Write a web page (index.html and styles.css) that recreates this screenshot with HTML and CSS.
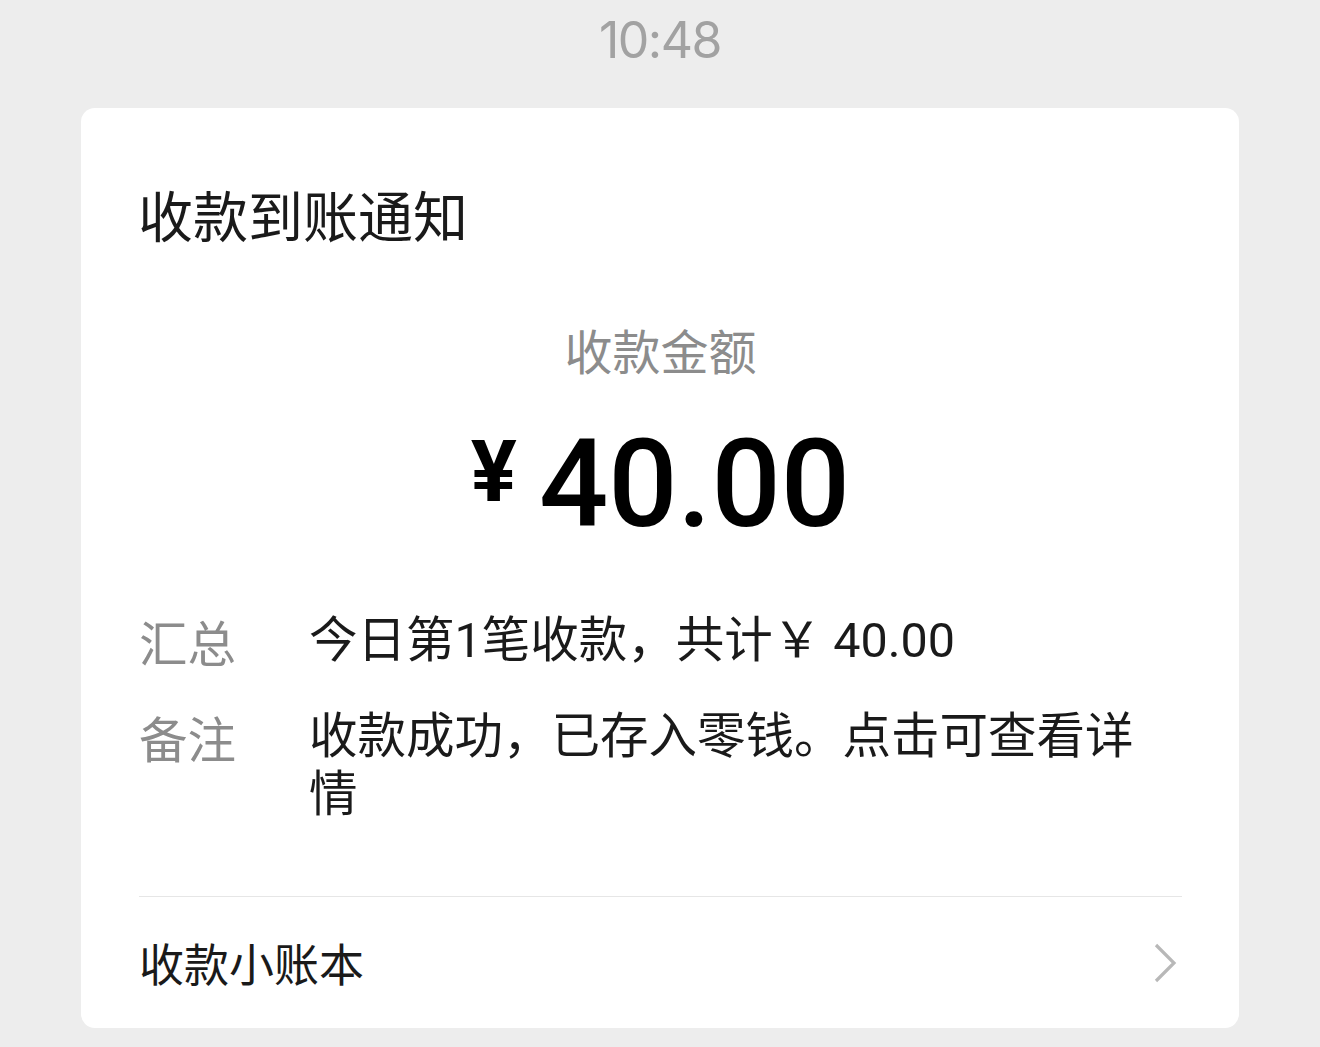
FILE: index.html
```html
<!DOCTYPE html>
<html lang="zh-CN">
<head>
<meta charset="utf-8">
<title>收款到账通知</title>
<link rel="stylesheet" href="styles.css">
</head>
<body>
  <div class="time">10:48</div>
  <div class="card">
    <div class="card-body">
      <div class="title">收款到账通知</div>
      <div class="amount-label">收款金额</div>
      <div class="amount">
        <span class="yen">¥</span><span class="num">40.00</span>
      </div>
      <div class="rows">
        <div class="row">
          <div class="label">汇总</div>
          <div class="value">今日第1笔收款，共计￥ 40.00</div>
        </div>
        <div class="row">
          <div class="label">备注</div>
          <div class="value">收款成功，已存入零钱。点击可查看详情</div>
        </div>
      </div>
    </div>
    <div class="footer">
      <span class="footer-text">收款小账本</span>
      <svg class="chevron" width="24" height="42" viewBox="0 0 24 42" aria-hidden="true">
        <path d="M3 3 L21 21 L3 39" fill="none" stroke="#b8b8b8" stroke-width="3.2" stroke-linecap="butt" stroke-linejoin="miter"/>
      </svg>
    </div>
  </div>
</body>
</html>
```

FILE: styles.css
```css
html, body {
  margin: 0;
  padding: 0;
  background: #ededed;
}
body {
  font-family: Inter, "Noto Sans CJK SC", sans-serif;
  color: #1a1a1a;
  width: 1320px;
  height: 1047px;
  overflow: hidden;
}
.time {
  padding-top: 10px;
  height: 60px;
  line-height: 60px;
  font-size: 50px;
  letter-spacing: -1.5px;
  color: #a2a2a2;
  text-align: center;
  font-weight: 400;
}
.card {
  margin: 38px 81px 0;
  background: #ffffff;
  border-radius: 14px;
  padding: 0 57px 0 58px;
}
.card-body {
  padding-top: 73px;
  border-bottom: 1.5px solid #e6e6e6;
  padding-bottom: 72px;
}
.title {
  font-family: "Noto Sans CJK SC", sans-serif;
  font-size: 55px;
  line-height: 64px;
  color: #1a1a1a;
  margin-left: -1px;
}
.amount-label {
  margin-top: 74px;
  font-family: "Noto Sans CJK SC", sans-serif;
  font-size: 48px;
  line-height: 60px;
  color: #8c8c8c;
  text-align: center;
}
.amount {
  margin-top: 44px;
  display: flex;
  justify-content: center;
  align-items: flex-start;
  color: #000;
}
.yen {
  font-family: Roboto, sans-serif;
  font-weight: 700;
  font-size: 86px;
  line-height: 86px;
  margin-top: 6px;
  margin-right: 22px;
}
.num {
  font-family: Roboto, sans-serif;
  font-weight: 500;
  font-size: 122px;
  line-height: 124px;
}
.rows {
  margin-top: 65px;
  display: flex;
  flex-direction: column;
  gap: 38px;
}
.row {
  display: flex;
  align-items: flex-start;
  font-size: 48.5px;
  line-height: 58px;
}
.label {
  width: 170px;
  flex: none;
  font-family: "Noto Sans CJK SC", sans-serif;
  color: #8c8c8c;
}
.value {
  flex: 1;
  max-width: 850px;
  font-family: Roboto, "Noto Sans CJK SC", sans-serif;
  color: #1a1a1a;
}
.footer {
  height: 131px;
  display: flex;
  align-items: center;
  justify-content: space-between;
}
.footer-text {
  font-family: "Noto Sans CJK SC", sans-serif;
  font-size: 45px;
  line-height: 58px;
  color: #1a1a1a;
}
.chevron {
  margin-right: 5px;
  display: block;
}
```
